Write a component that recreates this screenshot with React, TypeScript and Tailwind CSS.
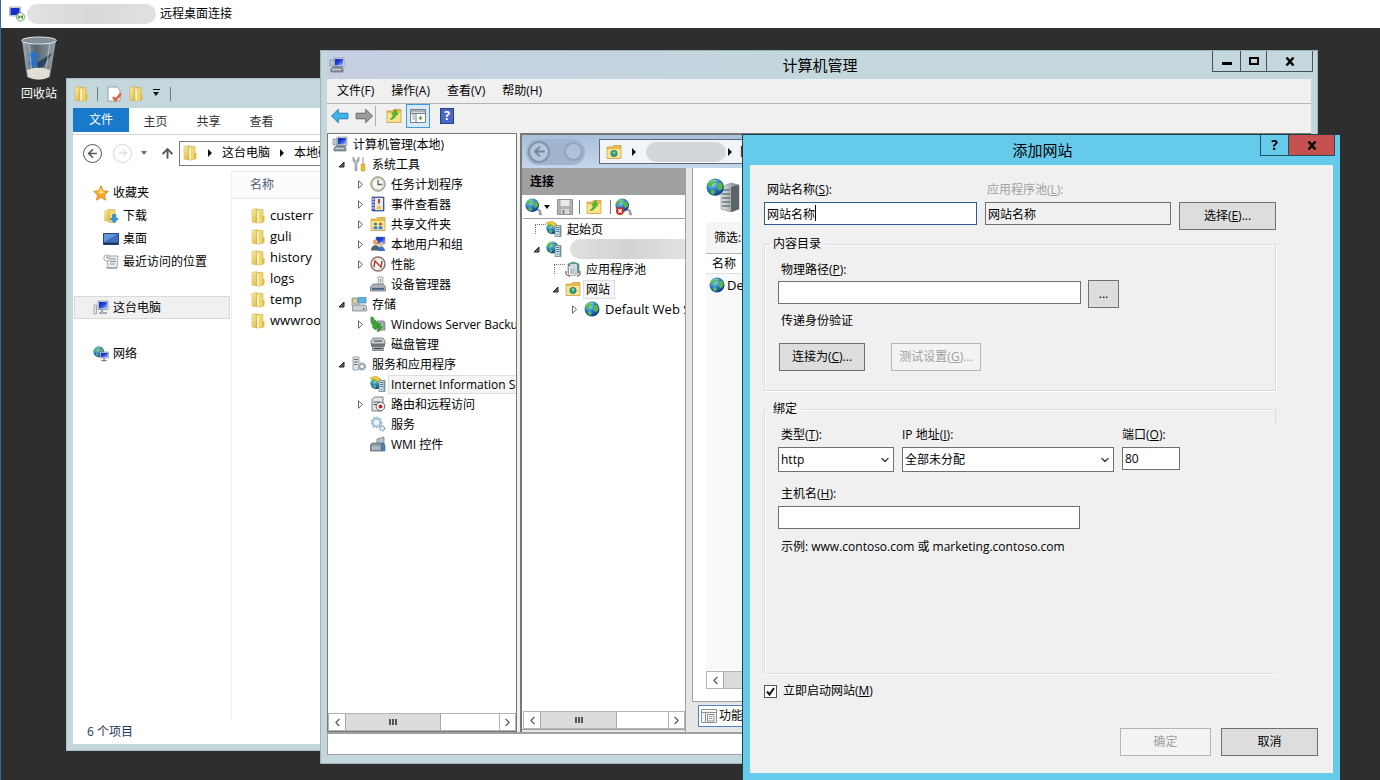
import type { ReactNode } from 'react';
import { ArrowLeft, ArrowRight, ArrowUp, ChevronDown, ChevronLeft, ChevronRight } from 'lucide-react';

type IconProps = { size?: number };

/* Dégradés partagés par toutes les icônes */
function IconDefs() {
  return (
    <svg width="0" height="0" className="absolute" aria-hidden="true">
      <defs>
        <linearGradient id="folder" x1="0" y1="0" x2="1" y2="1">
          <stop offset="0" stopColor="#fbf0a8" />
          <stop offset="1" stopColor="#d9b13c" />
        </linearGradient>
        <radialGradient id="globe" cx="0.35" cy="0.3" r="0.8">
          <stop offset="0" stopColor="#9fe0f5" />
          <stop offset="0.45" stopColor="#2b7fce" />
          <stop offset="1" stopColor="#0d2f78" />
        </radialGradient>
        <linearGradient id="metal" x1="0" y1="0" x2="1" y2="0">
          <stop offset="0" stopColor="#e6e9eb" />
          <stop offset="1" stopColor="#70787f" />
        </linearGradient>
        <linearGradient id="screen" x1="0" y1="0" x2="1" y2="1">
          <stop offset="0" stopColor="#0b1fb0" />
          <stop offset="0.5" stopColor="#2746dd" />
          <stop offset="1" stopColor="#a9c4ff" />
        </linearGradient>
        <linearGradient id="bin" x1="0" y1="0" x2="1" y2="0">
          <stop offset="0" stopColor="#b9c4cc" />
          <stop offset="0.4" stopColor="#5f6f7b" />
          <stop offset="1" stopColor="#aab6be" />
        </linearGradient>
      </defs>
    </svg>
  );
}

function Svg({ size = 16, box = 16, children }: IconProps & { box?: number; children: ReactNode }) {
  return (
    <svg width={size} height={size} viewBox={`0 0 ${box} ${box}`} className="shrink-0" aria-hidden="true">
      {children}
    </svg>
  );
}

const GlobeShape = () => (
  <>
    <circle cx="8" cy="8" r="7.5" fill="url(#globe)" />
    <path d="M3 3.2 6 1.4l3 .8-1 2-2.4 1L5 7.4 2.6 8 1.4 6zM9.6 5l3-1.6 2 3.2-.6 3-2.4 1.6-1.8-2.4zM4 10l3 .6 1 2-1.6 2L4 13z" fill="#58b94a" />
    <path d="M3 4.5A6 5 0 0 1 12 3 8 5 0 0 0 3 4.5z" fill="#fff" opacity=".45" />
  </>
);

const TowerShape = () => (
  <>
    <path d="M9 4.5h6V15.500H9z" fill="#cfe3ee" stroke="#5f7482" strokeWidth=".7" />
    <path d="M13.500 4.500H15v11h-1.500z" fill="#7f919c" />
    <path d="M10 6.500h3M10 8.500h3M10 10.500h3" stroke="#3f6f92" strokeWidth=".9" />
    <circle cx="11.5" cy="13.3" r=".9" fill="#55c13d" />
  </>
);

const MonitorShape = () => (
  <>
    <path d="M5 1h10v8.5H5z" fill="#e2e6ea" stroke="#7b8794" strokeWidth=".7" />
    <path d="M6 2h8v6.5H6z" fill="url(#screen)" />
  </>
);

const Globe = ({ size }: IconProps) => <Svg size={size}><GlobeShape /></Svg>;

const Folder = ({ size }: IconProps) => (
  <Svg size={size}>
    <path d="M2 1.5 7 .5l1 1v13.500l-6-1z" fill="url(#folder)" stroke="#cda93c" strokeWidth=".5" />
    <path d="M7 1.500h6v13H7z" fill="#f0d872" stroke="#c9a437" strokeWidth=".5" />
    <path d="M7 2 9.5 2.500v13L7 14.500z" fill="#fff6c4" stroke="#d2b04a" strokeWidth=".4" />
    <path d="M12 8h2.5v5.5L12 14.500z" fill="#e2bd4c" />
  </Svg>
);

const FlatFolder = ({ children }: { children?: ReactNode }) => (
  <Svg>
    <path d="M1 3h5l1.5-1.500H15V14.500H1z" fill="#e9bc4d" stroke="#b98d2c" strokeWidth=".6" />
    <path d="M1.5 5h13v9h-13z" fill="#fbe38e" />
    {children}
  </Svg>
);

const FolderUp = () => (
  <FlatFolder>
    <path d="M4 11.500c1-1 3-2.500 3.500-5L5.600 6l4-4.500L12 7l-1.800-.3C9.500 9.500 7 11.500 4 11.500z" fill="#4cc02c" stroke="#2d8f18" strokeWidth=".5" />
  </FlatFolder>
);

const SiteFolder = () => (
  <FlatFolder>
    <circle cx="8" cy="9.5" r="3.2" fill="#2b9e8f" stroke="#1e6f72" strokeWidth=".6" />
    <path d="M6.5 8.500 8 7.300l1.500 1.200L8 10z" fill="#a8e58a" />
  </FlatFolder>
);

const SharedFolder = () => (
  <FlatFolder>
    <circle cx="5.5" cy="8" r="1.6" fill="#2f8f86" />
    <circle cx="10.5" cy="8" r="1.6" fill="#d4483a" />
    <path d="M3 13.500c0-5 5-5 5 0zM8 13.500c0-5 5-5 5 0z" fill="#3f7fb5" stroke="#fff" strokeWidth=".4" />
  </FlatFolder>
);

const ComputerManagement = ({ size }: IconProps) => (
  <Svg size={size}>
    <MonitorShape />
    <path d="M1 3h4v6H1z" fill="#b8cdd6" stroke="#6d7c85" strokeWidth=".6" />
    <path d="M4 10h9l1 2v3H2v-3z" fill="#8d979d" stroke="#52595e" strokeWidth=".6" />
    <path d="M3.5 12.500h9" stroke="#e9edef" strokeDasharray="2 1" />
  </Svg>
);

const ThisPc = () => (
  <Svg>
    <MonitorShape />
    <path d="M1 5h2.5v9H1z" fill="#dfe4e8" stroke="#7b8794" strokeWidth=".6" />
    <path d="M9 9.500v2.500M6 13h8" stroke="#8c98a3" strokeWidth="1.6" />
  </Svg>
);

const Network = () => (
  <Svg>
    <g transform="scale(.72)"><GlobeShape /></g>
    <path d="M7 6h8.5v6H7z" fill="#e2e6ea" stroke="#7b8794" strokeWidth=".6" />
    <path d="M7.8 6.800h7v4.500h-7z" fill="url(#screen)" />
    <path d="M11 12v2M8.5 14.700h5" stroke="#6c7b8a" strokeWidth="1.2" />
  </Svg>
);

const RemoteDesktop = () => (
  <Svg>
    <path d="M.5 1h11v9H.5z" fill="#d8dce4" stroke="#8a93a5" strokeWidth=".6" />
    <path d="M1.5 2h9v7h-9z" fill="#1230c8" />
    <circle cx="11.5" cy="11" r="4.2" fill="#eef3ea" stroke="#6b7f6b" strokeWidth=".7" />
    <path d="m9 9.500 1.700 1.500L9 12.500M14 9.500 12.300 11l1.700 1.500" fill="none" stroke="#3a8b2b" strokeWidth="1.2" />
  </Svg>
);

const Star = () => (
  <Svg>
    <path d="m8 .8 2.200 4.900 5.200.6-3.900 3.600 1.100 5.300L8 12.500l-4.600 2.700 1.100-5.300L.6 6.300l5.200-.6z" fill="#f6a52c" stroke="#d97f14" strokeWidth=".7" />
    <path d="m8 3 1.500 3.500 3 .5L8 9 3.500 7l3-.5z" fill="#ffe07e" />
  </Svg>
);

const Downloads = () => (
  <Svg>
    <path d="M1 2 6 1l1 1v12l-6-1z" fill="url(#folder)" />
    <path d="M6 1.500h6v13H6z" fill="#f0d872" stroke="#c9a437" strokeWidth=".5" />
    <path d="M9.5 6.500H13v4h2.500L11.300 15 7 10.500h2.500z" fill="#2f9be6" stroke="#1a69b1" strokeWidth=".5" />
  </Svg>
);

const DesktopIcon = () => (
  <Svg>
    <path d="M.5 2.500h15v11H.5z" fill="#3d6fc0" stroke="#27457e" />
    <path d="M1 3h14L1 11z" fill="#6096dc" />
    <path d="M1 12.500h14" stroke="#1c2f55" strokeWidth="1.5" />
  </Svg>
);

const Recent = () => (
  <Svg>
    <path d="M4 2h11l-1 12H5z" fill="#eef0f1" stroke="#8e969b" strokeWidth=".8" />
    <path d="M7 5h6M7 7.500h6M7 10h5M3 14h11" stroke="#82909a" />
    <circle cx="4" cy="4" r="3.2" fill="#f6f8f9" stroke="#8e969b" strokeWidth=".8" />
    <path d="M4 2v2h2" fill="none" stroke="#5d6b75" strokeWidth=".8" />
  </Svg>
);

const Tools = () => (
  <Svg>
    <path d="M2 1v4l2 2v7.500h2V7l2-2V1L6.500 3v2h-3V3z" fill="#c3c9cd" stroke="#6e777d" strokeWidth=".6" />
    <path d="M11.5 1h1v7h-1z" fill="#8b9499" />
    <path d="M10.200 8h3.600v6.500q-1.800 1.500-3.600 0z" fill="#f4bf2c" stroke="#b5820f" strokeWidth=".6" />
  </Svg>
);

const ClockIcon = () => (
  <Svg>
    <circle cx="8" cy="8" r="7.2" fill="#d9d8d0" stroke="#8b8a7d" />
    <circle cx="8" cy="8" r="5.4" fill="#fffdf1" stroke="#b6ad8d" strokeWidth=".5" />
    <path d="M8 4v4.500h4" fill="none" stroke="#48627e" strokeWidth="1.3" />
  </Svg>
);

const EventViewer = () => (
  <Svg>
    <path d="M2 1h12v14H2z" fill="#4766ae" stroke="#293e77" strokeWidth=".6" />
    <path d="M5 2h8v12H5z" fill="#e8ecf5" />
    <path d="M2 3h2.500M2 6h2.500M2 9h2.500M2 12h2.500" stroke="#fff" />
    <path d="M8 3h2v4.500H8z" fill="#d23c32" />
    <path d="M9 8.500 12 13H6z" fill="#efc22b" />
  </Svg>
);

const Users = () => (
  <Svg>
    <path d="M6 1h9v7H6z" fill="url(#screen)" stroke="#8490a6" strokeWidth=".6" />
    <circle cx="5.5" cy="6" r="2.6" fill="#e3a16a" />
    <path d="M1 14.500c0-7 9-7 9 0z" fill="#4f6570" />
    <circle cx="11" cy="8.5" r="2.2" fill="#e9bf92" />
    <path d="M7.5 15c0-6 7.500-6 7.500 0z" fill="#3f6dc6" />
  </Svg>
);

const Performance = () => (
  <Svg>
    <circle cx="8" cy="8" r="7" fill="#fff" stroke="#8c6a66" strokeWidth="1.4" />
    <circle cx="8" cy="8" r="5" fill="none" stroke="#c9c9c9" strokeWidth=".8" />
    <path d="m4 11 1-6 6 6 1-6" fill="none" stroke="#c03329" strokeWidth="1.4" />
  </Svg>
);

const Devices = () => (
  <Svg>
    <path d="M8 1h5v7H8z" fill="#e9ece9" stroke="#87908b" strokeWidth=".7" />
    <path d="M10.500 3v3" stroke="#5f9d59" />
    <path d="M3 8h10l2.500 3v4H.5v-4z" fill="#aab3ba" stroke="#626c75" strokeWidth=".7" />
    <path d="M2 12.800h12" stroke="#47618a" strokeWidth="1.8" />
  </Svg>
);

const Storage = () => (
  <Svg>
    <path d="M1 2h7v8H1z" fill="#d5d9d8" stroke="#7c8584" strokeWidth=".7" />
    <circle cx="4" cy="5" r="2.5" fill="#e5d98f" stroke="#7c8584" strokeWidth=".6" />
    <path d="M7 1.500h8v5.500H7z" fill="#5bb4e6" stroke="#4e7d97" strokeWidth=".7" />
    <path d="M3 9h11l1.500 2v4H1.500v-4z" fill="#c9cfd2" stroke="#6d767b" strokeWidth=".7" />
    <circle cx="12.8" cy="13" r=".9" fill="#3fae31" />
  </Svg>
);

const Backup = () => (
  <Svg>
    <path d="M7 5h7l1 2v7H7z" fill="#a6afb6" stroke="#666f77" strokeWidth=".7" />
    <circle cx="11.5" cy="9.5" r="2" fill="#dfe4e7" stroke="#666f77" strokeWidth=".6" />
    <path d="M1 1c4.500 0 2.500 3 3.500 6l.5-3 3.500 4.500L5.500 14 2 10.500l1.700-.5C1.500 8.500.5 6 1 1z" fill="#3aa834" stroke="#237520" strokeWidth=".6" />
    <path d="M7 15.500c3.500 0 4.500-2 3.500-5l2 .5L9.500 7 7 11l1.500.3c0 1.700-.5 3-1.500 4.200z" fill="#3aa834" stroke="#237520" strokeWidth=".5" />
  </Svg>
);

const Disk = () => (
  <Svg>
    <path d="M3 2h10l2 3v3H1V5z" fill="#c5cacc" stroke="#5f6668" strokeWidth=".7" />
    <path d="M1 8h14v2.500H1z" fill="#6d7578" />
    <path d="M2.5 10.500h11v4h-11z" fill="#aab0b2" stroke="#5f6668" strokeWidth=".7" />
    <path d="M4 5h8M4 12.500h8" stroke="#3f4649" strokeWidth="1.2" />
  </Svg>
);

const ServicesApps = () => (
  <Svg>
    <path d="M2 1h6v13H2z" fill="#dfe3e5" stroke="#7d878d" strokeWidth=".7" />
    <path d="M3 3.500h4M3 6h4M3 8.500h3" stroke="#5e6b73" />
    <circle cx="11" cy="10.5" r="3.2" fill="none" stroke="#8fa6b7" strokeWidth="2" strokeDasharray="1.7 .8" />
    <circle cx="11" cy="10.5" r="2.3" fill="none" stroke="#8fa6b7" strokeWidth="1.2" />
  </Svg>
);

const Iis = () => (
  <Svg>
    <g transform="translate(0 1) scale(.78)"><GlobeShape /></g>
    <path d="M0 2 6 0l5 3.500-2.500 3L6 4z" fill="#f2c93a" stroke="#b98f16" strokeWidth=".5" />
    <TowerShape />
  </Svg>
);

const GlobeServer = () => (
  <Svg>
    <g transform="scale(.8)"><GlobeShape /></g>
    <TowerShape />
  </Svg>
);

const BigGlobeServer = () => (
  <Svg size={34} box={34}>
    <path d="m15 9 10-4 8 2v24l-8 3-10-3z" fill="url(#metal)" stroke="#798187" strokeWidth=".6" />
    <path d="m25 9 8-2v24l-8 3z" fill="#5d6468" />
    <path d="M16 12h8M16 16h8M16 20h8M16 24h8M16 28h8" stroke="#6d7579" strokeWidth="1.4" />
    <g transform="scale(1.15)"><GlobeShape /></g>
  </Svg>
);

const Routing = () => (
  <Svg>
    <path d="M2 3.500 5 1h8v12l-3 2H2z" fill="#e3e6e7" stroke="#596165" strokeWidth=".8" />
    <path d="M3.5 6h6M3.500 8.500h3" stroke="#48545b" />
    <circle cx="10.5" cy="10.5" r="4.3" fill="#fff" stroke="#333" strokeWidth=".8" />
    <circle cx="10.5" cy="10.5" r="2" fill="#d8202a" />
  </Svg>
);

const Gears = () => (
  <Svg>
    <circle cx="6.5" cy="6.5" r="4.6" fill="none" stroke="#9dbbd2" strokeWidth="2.6" strokeDasharray="2 1" />
    <circle cx="6.5" cy="6.5" r="3.6" fill="#edf4f9" stroke="#9dbbd2" strokeWidth="1.4" />
    <circle cx="12.3" cy="12.3" r="2.3" fill="#edf4f9" stroke="#86a9c3" strokeWidth="1.7" strokeDasharray="1.4 .6" />
  </Svg>
);

const Wmi = () => (
  <Svg>
    <path d="M7 3 14 1v8H7z" fill="#b6c0c6" stroke="#68747b" strokeWidth=".7" />
    <path d="M2 7h9l1 2v6H.5V9z" fill="#8d9aa3" stroke="#4e5b64" strokeWidth=".7" />
    <path d="M2 11h8M2 13h8" stroke="#dfe6ea" strokeWidth=".8" />
    <path d="M12 7h2v2h1v6h-3z" fill="#4487c4" stroke="#275b8d" strokeWidth=".5" />
  </Svg>
);

const AppPool = () => (
  <Svg>
    <path d="M3 3 8 1l6 2v9H3z" fill="#45a59d" stroke="#387b7b" strokeWidth=".6" />
    <path d="M5 3h7v10H5z" fill="#fff" stroke="#7f8b92" strokeWidth=".7" />
    <path d="M3.5 5H10v9.500H3.500z" fill="#f2f5f7" stroke="#7f8b92" strokeWidth=".7" />
    <path d="M5 8h4M5 10h4M5 12h4" stroke="#5b7f9d" strokeWidth=".8" />
    <path d="M1 10v3q2 2.500 4 2.200M15 10v3q-1 2-3 2.200" fill="none" stroke="#a04f3e" strokeWidth="1.2" />
  </Svg>
);

const GlobePlug = ({ error = false }: { error?: boolean }) => (
  <Svg size={18} box={18}>
    <path d="m11 11 4 2v3h2" stroke="#9aa5ab" strokeWidth="2.4" fill="none" />
    <g transform="scale(.9)"><GlobeShape /></g>
    {error && <circle cx="5" cy="13" r="4" fill="#c92a22" />}
    {error && <path d="m3.300 11.300 3.400 3.400m0-3.400-3.400 3.400" stroke="#fff" strokeWidth="1.3" />}
  </Svg>
);

const Floppy = () => (
  <Svg>
    <path d="M.5.5h15v15H.5z" fill="#b0b0b0" stroke="#929292" />
    <path d="M3.500 1h9v6h-9z" fill="#e9e9e9" />
    <path d="M4 10h8v5H4z" fill="#d8d8d8" />
    <path d="M5.500 11h2v4h-2z" fill="#858585" />
  </Svg>
);

const Properties = () => (
  <Svg>
    <path d="M2 1h9l3 3v11H2z" fill="#fff" stroke="#838b92" strokeWidth=".8" />
    <path d="m7 11 2.500 3L15 7.500" fill="none" stroke="#dd6442" strokeWidth="2.6" />
  </Svg>
);

const PanelIcon = () => (
  <Svg>
    <path d="M.5 1.500h15v13H.5z" fill="#fff" stroke="#7a7f85" />
    <path d="M1 2h14v2.500H1z" fill="#a9b4c0" />
    <path d="M6 5v9M2.500 7h2M2.500 9h2M2.500 11h2M1 5.500h14" stroke="#69727b" strokeWidth=".9" />
    <path d="m11.500 7.500-3 2.500 3 2.500z" fill="#3ea032" />
  </Svg>
);

const ViewIcon = () => (
  <Svg>
    <path d="M.5 1.500h15v13H.5z" fill="#f6f6f6" stroke="#8b9095" />
    <path d="M1 4.500h14M4.500 4.500v10" stroke="#8b9095" />
    <path d="M6.500 6.500H13v6.500H6.500z" fill="#fff" stroke="#6b7278" strokeWidth=".8" />
    <path d="M8 8.500h3.500M8 10.500h3.500" stroke="#6b7278" strokeWidth=".8" />
  </Svg>
);

const HelpIcon = () => (
  <span className="flex h-4 w-3.5 items-center justify-center border border-[#2a3f8f] bg-[#4a66c4] text-xs font-bold text-white">?</span>
);

const BlockArrow = ({ right = false }: { right?: boolean }) => (
  <Svg size={18}>
    <path
      d={right ? 'M15.500 8 9.500 2v3.500H1v5h8.500V14z' : 'M.5 8l6-6v3.500H15v5H6.500V14z'}
      fill={right ? '#9c9c9c' : '#3fb2ea'}
      stroke={right ? '#5f5f5f' : '#1d77ab'}
      strokeWidth=".8"
    />
  </Svg>
);

const RecycleBin = () => (
  <svg width="38" height="46" viewBox="0 0 38 46" aria-hidden="true">
    <path d="M2 4 7 41q12 6 23 0l6-37z" fill="url(#bin)" opacity=".85" />
    <path d="M7 34q12-5 23 0l-1 7q-11 5-21 0z" fill="#e2ded2" />
    <path d="m8 18 6-3 5 4-3 5 5 4-7 4-6-4 3-4z" fill="#2d6fc2" />
    <path d="m17 27 15-10-9 14-5 1z" fill="#2c4460" />
    <path d="M9 7 12 40M30 6l-5 34" stroke="#dfe6ea" strokeWidth="1.2" opacity=".5" />
    <ellipse cx="19" cy="4.5" rx="17.5" ry="3.5" fill="#7f909c" stroke="#dfe5e9" />
  </svg>
);

/* Petit triangle plein des barres d'adresse */
const Caret = ({ down = false }: { down?: boolean }) => (
  <svg width="8" height="8" viewBox="0 0 8 8" className="shrink-0" aria-hidden="true">
    <path d={down ? 'M1 2h6L4 6z' : 'M2 0v8l4-4z'} fill="#111" />
  </svg>
);

const Twisty = ({ open }: { open: boolean }) => (
  <svg width="9" height="9" viewBox="0 0 9 9" aria-hidden="true">
    {open ? <path d="M7 2v5H2z" fill="#666" stroke="#222" /> : <path d="M2.500.8v7.400l4-3.700z" fill="#fff" stroke="#666" />}
  </svg>
);

type Node = {
  label: string;
  icon: ReactNode;
  level: number;
  open?: boolean;
  selected?: boolean;
  masked?: boolean;
  dotted?: boolean;
};

const indents = ['pl-1', 'pl-1', 'pl-[23px]', 'pl-[42px]'];

function Tree({ nodes }: { nodes: Node[] }) {
  return (
    <ul className="flex-1 overflow-hidden">
      {nodes.map((n) => (
        <li key={n.label} className={`flex h-5 items-center whitespace-nowrap ${indents[n.level]}`}>
          {n.level > 0 && (
            <span className="flex w-[19px] shrink-0 items-center justify-center">
              {n.open !== undefined && <Twisty open={n.open} />}
              {n.dotted && <span className="ml-2 h-2.5 flex-1 border-t border-l border-dotted border-gray-500" />}
            </span>
          )}
          {n.icon}
          {n.masked ? (
            <span className="ml-2 h-5 flex-1 rounded-l-full bg-linear-to-r from-[#e0e0e0] via-[#d3d3d3] to-[#e2e2e2]" />
          ) : (
            <span className={`ml-0.5 border pr-1 pl-0.5 leading-[17px] ${n.selected ? 'border-[#dedede] bg-[#f5f5f5]' : 'border-transparent'} ${n.level === 3 ? 'text-[13px]' : ''}`}>
              {n.label}
            </span>
          )}
        </li>
      ))}
    </ul>
  );
}

const managementNodes: Node[] = [
  { label: '计算机管理(本地)', icon: <ComputerManagement />, level: 0 },
  { label: '系统工具', icon: <Tools />, level: 1, open: true },
  { label: '任务计划程序', icon: <ClockIcon />, level: 2, open: false },
  { label: '事件查看器', icon: <EventViewer />, level: 2, open: false },
  { label: '共享文件夹', icon: <SharedFolder />, level: 2, open: false },
  { label: '本地用户和组', icon: <Users />, level: 2, open: false },
  { label: '性能', icon: <Performance />, level: 2, open: false },
  { label: '设备管理器', icon: <Devices />, level: 2 },
  { label: '存储', icon: <Storage />, level: 1, open: true },
  { label: 'Windows Server Backup', icon: <Backup />, level: 2, open: false },
  { label: '磁盘管理', icon: <Disk />, level: 2 },
  { label: '服务和应用程序', icon: <ServicesApps />, level: 1, open: true },
  { label: 'Internet Information Services', icon: <Iis />, level: 2, selected: true },
  { label: '路由和远程访问', icon: <Routing />, level: 2, open: false },
  { label: '服务', icon: <Gears />, level: 2 },
  { label: 'WMI 控件', icon: <Wmi />, level: 2 },
];

const siteNodes: Node[] = [
  { label: '起始页', icon: <Iis />, level: 1, dotted: true },
  { label: 'server', icon: <GlobeServer />, level: 1, open: true, masked: true },
  { label: '应用程序池', icon: <AppPool />, level: 2, dotted: true },
  { label: '网站', icon: <SiteFolder />, level: 2, open: true, selected: true },
  { label: 'Default Web Site', icon: <Globe />, level: 3, open: false },
];

function ScrollBar({ thumb }: { thumb: string }) {
  return (
    <div className="flex h-[18px] border border-[#b4b4b4] bg-white">
      <button aria-label="向左滚动" className="flex w-4 items-center justify-center text-[#555]"><ChevronLeft size={13} /></button>
      <div className={`flex items-center justify-center gap-px border-x border-[#a8a8a8] bg-[#dcdcdc] ${thumb}`}>
        <span className="h-1.5 w-0.5 bg-[#555]" />
        <span className="h-1.5 w-0.5 bg-[#555]" />
        <span className="h-1.5 w-0.5 bg-[#555]" />
      </div>
      <div className="flex-1" />
      <button aria-label="向右滚动" className="flex w-4 items-center justify-center border-l border-[#b4b4b4] text-[#555]"><ChevronRight size={13} /></button>
    </div>
  );
}

/* Explorateur de fichiers */
const folders = ['custerr', 'guli', 'history', 'logs', 'temp', 'wwwroot'];

function Explorer() {
  return (
    <section className="absolute top-[50px] bottom-[29px] left-[65px] flex w-[600px] flex-col border border-[#a9bcc3] bg-[#c3d7dd] px-1.5 pb-1.5">
      <header className="flex h-[29px] items-center">
        <Folder />
        <span className="ml-2 h-3.5 border-l border-[#6d7b81]" />
        <span className="ml-2 flex items-center gap-1.5"><Properties /><Folder /></span>
        <span className="ml-1.5 flex w-3 flex-col items-center"><span className="w-[7px] border-t border-black" /><Caret down /></span>
        <span className="ml-2 h-3.5 border-l border-[#6d7b81]" />
      </header>
      <div className="flex flex-1 flex-col bg-white">
        <nav className="flex h-[27px] border-b border-[#d5d6d8] text-[#333]">
          <button className="h-6 w-14 bg-[#1979ca] text-white">文件</button>
          <button className="w-[53px] pt-0.5">主页</button>
          <button className="w-[53px] pt-0.5">共享</button>
          <button className="w-[53px] pt-0.5">查看</button>
        </nav>
        <div className="flex h-9 items-center pl-2.5">
          <button aria-label="后退" className="flex size-[19px] items-center justify-center rounded-full border border-[#555] text-[#555]"><ArrowLeft size={13} strokeWidth={3} /></button>
          <button aria-label="前进" className="ml-[11px] flex size-[19px] items-center justify-center rounded-full border border-[#d5d5d5] text-[#d0d0d0]"><ArrowRight size={12} /></button>
          <span className="ml-2 opacity-60"><Caret down /></span>
          <button aria-label="上移" className="ml-3 text-[#555]"><ArrowUp size={15} strokeWidth={3} /></button>
          <div className="ml-1 flex h-[25px] flex-1 items-center border border-[#777] pl-0.5 text-black">
            <Folder />
            <span className="mx-2"><Caret /></span>这台电脑
            <span className="mx-2"><Caret /></span>本地磁盘
          </div>
        </div>
        <div className="flex flex-1">
          <ul className="w-[159px] border-r border-[#efefef] pt-2.5">
            <li className="flex h-[23px] items-center gap-1 pl-5"><Star />收藏夹</li>
            <li className="flex h-[23px] items-center gap-1 pl-[30px]"><Downloads />下载</li>
            <li className="flex h-[23px] items-center gap-1 pl-[30px]"><DesktopIcon />桌面</li>
            <li className="flex h-[23px] items-center gap-1 pl-[30px]"><Recent />最近访问的位置</li>
            <li className="mt-[23px] mr-px ml-px flex h-[23px] items-center gap-1 border border-[#d9d9d9] bg-[#f0f0f0] pl-[18px]"><ThisPc />这台电脑</li>
            <li className="mt-[23px] flex h-[23px] items-center gap-1 pl-5"><Network />网络</li>
          </ul>
          <div className="flex-1">
            <div className="flex h-7 items-center border-y border-[#e5e5e5] bg-[#fcfcfc] pl-[18px] text-[#4c607a]">名称</div>
            <ul className="pt-1.5 text-[13px]">
              {folders.map((f) => (
                <li key={f} className="flex h-[21px] items-center gap-1 pl-[18px]"><Folder />{f}</li>
              ))}
            </ul>
          </div>
        </div>
        <footer className="flex h-6 items-center pl-3.5 text-[#1e395b]">6 个项目</footer>
      </div>
    </section>
  );
}

/* Gestion de l'ordinateur */
function IisPane() {
  return (
    <div className="flex min-w-0 flex-1 flex-col border-t-2 border-l-2 border-[#777] bg-[#e6e6e6]">
      <div className="flex h-[33px] items-center bg-linear-to-b from-[#a9c0dc] to-[#c4d6ea] pl-1">
        <div className="flex h-[26px] w-[59px] items-center justify-between rounded-full bg-[#9fb5cf] px-0.5">
          <span className="flex size-[22px] items-center justify-center rounded-full border-2 border-[#8294a9] bg-[#b4c6db] text-[#76869a]"><ArrowLeft size={15} strokeWidth={3} /></span>
          <span className="size-[19px] rounded-full border-2 border-[#8fa5c0] bg-[#aec3da]" />
        </div>
        <div className="ml-3.5 flex h-[25px] flex-1 items-center border border-[#5b6b7c] bg-[#f1f5fa] pl-1.5">
          <SiteFolder />
          <span className="ml-2"><Caret /></span>
          <span className="ml-2 h-5 w-20 rounded-full bg-[#d3d7dc]" />
          <span className="mr-1.5"><Caret /></span>网站
        </div>
      </div>
      <div className="flex flex-1 gap-1.5">
        <div className="flex w-[164px] flex-col border-r border-[#a0a0a0] bg-white pl-px">
          <h2 className="-ml-px flex h-[27px] items-center bg-[#a0a0a0] pl-2 font-bold">连接</h2>
          <div className="flex h-6 items-center border-b border-[#a0a0a0] pl-0.5">
            <GlobePlug />
            <Caret down />
            <span className="ml-1.5"><Floppy /></span>
            <span className="mx-1.5 h-3.5 border-l border-[#777]" />
            <FolderUp />
            <span className="mr-1 ml-2 h-3.5 border-l border-[#777]" />
            <GlobePlug error />
          </div>
          <Tree nodes={siteNodes} />
          <ScrollBar thumb="w-[77px]" />
          <div className="-ml-px h-[3px] border-t border-[#a0a0a0] bg-[#e6e6e6]" />
        </div>
        <div className="flex min-w-0 flex-1 flex-col">
          <div className="flex flex-1 flex-col border-b border-l border-[#a0a0a0] bg-white pb-3 pl-[13px]">
            <div className="py-2.5"><BigGlobeServer /></div>
            <div className="flex h-8 items-center border-b border-[#b8b8b8] bg-[#f5f5f5] pl-2">筛选:</div>
            <div className="flex h-5 items-center border-b border-[#e0e0e0] pl-1.5">名称</div>
            <div className="flex flex-1 items-start gap-0.5 bg-[#f9f9f9] pt-[3px] pl-[3px] text-[13px] leading-4"><Globe />Default Web Site</div>
            <ScrollBar thumb="w-[300px]" />
          </div>
          <div className="flex h-[30px] items-start pt-[3px] pl-1.5">
            <button className="flex h-[22px] items-center gap-0.5 border border-[#4d86c6] bg-white px-0.5"><ViewIcon />功能视图</button>
          </div>
        </div>
      </div>
    </div>
  );
}

function ComputerManagementWindow() {
  return (
    <section className="absolute top-[22px] right-[62px] bottom-4 left-[319px] flex flex-col border border-[#9fb2ba] bg-[#c3d7dd] px-1.5 pb-2">
      <header className="-mr-0.5 grid h-7 shrink-0 grid-cols-[1fr_auto_1fr] items-center bg-linear-to-r from-[#c6cfe2] via-[#c3d7dd] to-[#c3d7dd]">
        <span className="pl-0.5"><ComputerManagement /></span>
        <h1 className="text-[15px] leading-6">计算机管理</h1>
        <div className="flex h-[21px] self-start justify-self-end border border-t-0 border-[#44525c]">
          <button aria-label="最小化" className="flex w-7 items-center justify-center border-r border-[#44525c]"><span className="mt-1 h-[3px] w-2.5 bg-black" /></button>
          <button aria-label="最大化" className="flex w-[26px] items-center justify-center border-r border-[#44525c]"><span className="h-2 w-2.5 border-2 border-black" /></button>
          <CloseButton />
        </div>
      </header>
      <nav className="flex h-[25px] shrink-0 items-center gap-[17px] border-b border-[#b5b5b5] bg-[#f0f0f0] pl-2.5">
        <button>文件(F)</button>
        <button>操作(A)</button>
        <button>查看(V)</button>
        <button>帮助(H)</button>
      </nav>
      <div className="flex h-[29px] shrink-0 items-start bg-[#f0f0f0] pl-1">
        <div className="flex h-6 items-center">
          <BlockArrow />
          <span className="ml-1.5"><BlockArrow right /></span>
          <span className="mr-2.5 ml-0.5 h-5 border-l border-[#b0b0b0]" />
          <FolderUp />
          <span className="ml-1 flex size-6 items-center justify-center border border-[#4496dc] bg-[#d8eafa]"><PanelIcon /></span>
          <span className="ml-2.5"><HelpIcon /></span>
        </div>
      </div>
      <div className="flex min-h-0 flex-1 gap-[3px] border-b border-[#a0a0a0] bg-[#f0f0f0]">
        <div className="flex w-[190px] flex-col border border-[#777] bg-white">
          <Tree nodes={managementNodes} />
          <ScrollBar thumb="w-24" />
        </div>
        <IisPane />
      </div>
      <footer className="h-[22px] shrink-0 border border-[#a0a0a0] bg-white" />
    </section>
  );
}

function CloseButton() {
  return (
    <button aria-label="关闭" className="flex w-[45px] items-center justify-center">
      <svg width="10" height="9" viewBox="0 0 10 9" aria-hidden="true"><path d="m1.500.5 7 8m0-8-7 8" stroke="#000" strokeWidth="2.4" /></svg>
    </button>
  );
}

/* Boîte de dialogue « ajouter un site » */
const field = 'h-[23px] min-w-0 border border-[#707070] bg-white px-0.5 outline-none';
const button = 'h-7 border border-[#707070] bg-[#dddddd]';
const buttonOff = 'h-7 border border-[#b5b5b5] bg-[#f3f3f3] text-[#a0a0a0]';
const group = 'relative border border-[#dcdcdc] pr-3 pl-[13px] shadow-[inset_1px_1px_0_#fff,1px_1px_0_#fff]';

function Select({ id, value }: { id: string; value: string }) {
  return (
    <span className="relative flex">
      <select id={id} defaultValue={value} className="h-[25px] w-full appearance-none border border-[#707070] bg-white px-0.5 outline-none">
        <option>{value}</option>
      </select>
      <ChevronDown size={12} strokeWidth={3} className="pointer-events-none absolute top-[7px] right-[3px] text-[#444]" />
    </span>
  );
}

function AddSiteDialog() {
  return (
    <section role="dialog" aria-label="添加网站" className="absolute top-[106px] right-10 bottom-0 left-[741px] flex flex-col border-t border-l border-[#1f3e4c] bg-[#66cbea] pr-[7px] pb-[7px] pl-[7px]">
      <header className="-mr-0.5 grid h-[30px] shrink-0 grid-cols-[1fr_auto_1fr] items-center">
        <span />
        <h1 className="text-[15px] leading-7">添加网站</h1>
        <div className="flex h-[21px] self-start justify-self-end border border-t-0 border-[#1f4e5e]">
          <button aria-label="帮助" className="w-7 border-r border-[#1f4e5e] text-sm leading-5 font-bold">?</button>
          <span className="flex bg-[#c75050]"><CloseButton /></span>
        </div>
      </header>
      <form className="flex flex-1 flex-col bg-[#f0f0f0] pt-[15px] pr-[15px] pb-[17px] pl-3.5">
        <div className="mr-[42px] grid grid-cols-[213fr_186fr_97px] gap-2">
          <div className="flex flex-col gap-0.5">
            <label htmlFor="site" className="h-5 pl-[3px] leading-5">网站名称(<u>S</u>):</label>
            <span className="relative flex">
              <input id="site" defaultValue="网站名称" className="h-[23px] w-full border border-[#2f5b8c] bg-white px-0.5 outline-none" />
              <span className="absolute top-[3px] left-[51px] h-4 w-px bg-black" />
            </span>
          </div>
          <div className="flex flex-col gap-0.5">
            <label htmlFor="pool" className="h-5 pl-0.5 leading-5 text-[#a0a0a0]">应用程序池(<u>L</u>):</label>
            <input id="pool" readOnly defaultValue="网站名称" className="h-[23px] min-w-0 border border-[#707070] px-0.5 outline-none" />
          </div>
          <button type="button" className={`${button} mt-[22px]`}>选择(<u>E</u>)...</button>
        </div>

        <fieldset className={`${group} mt-1.5 mr-[42px] pb-[19px]`}>
          <legend className="-ml-[9px] px-1 leading-4">内容目录</legend>
          <div className="flex flex-col pt-2">
            <label htmlFor="path" className="pl-[3px] leading-5">物理路径(<u>P</u>):</label>
            <div className="flex gap-[7px]">
              <input id="path" className={`${field} mt-px w-[303px]`} />
              <button type="button" aria-label="浏览" className={`${button} w-[31px]`}>...</button>
            </div>
            <p className="mt-[3px] pl-[3px] leading-5">传递身份验证</p>
            <div className="mt-3 ml-px flex gap-[26px]">
              <button type="button" className={`${button} w-[86px]`}>连接为(<u>C</u>)...</button>
              <button type="button" disabled className={`${buttonOff} w-[90px]`}>测试设置(<u>G</u>)...</button>
            </div>
          </div>
        </fieldset>

        <fieldset className="relative mt-2.5 mr-[42px] flex-1 border border-r-0 border-[#dcdcdc] pl-[13px] shadow-[inset_1px_1px_0_#fff,0_1px_0_#fff]">
          <legend className="-ml-[9px] px-1 leading-4">绑定</legend>
          <span className="absolute -top-2 right-0 h-4 border-r border-[#dcdcdc]" />
          <div className="flex gap-2 pt-2">
            <div className="flex w-[116px] flex-col gap-0.5">
              <label htmlFor="type" className="pl-[3px] leading-5">类型(<u>T</u>):</label>
              <Select id="type" value="http" />
            </div>
            <div className="flex w-[212px] flex-col gap-0.5">
              <label htmlFor="ip" className="leading-5">IP 地址(<u>I</u>):</label>
              <Select id="ip" value="全部未分配" />
            </div>
            <div className="flex w-[58px] flex-col gap-0.5">
              <label htmlFor="port" className="leading-5">端口(<u>O</u>):</label>
              <input id="port" defaultValue="80" className={field} />
            </div>
          </div>
          <div className="mt-3 flex flex-col gap-0.5">
            <label htmlFor="host" className="pl-[3px] leading-5">主机名(<u>H</u>):</label>
            <input id="host" className={`${field} w-[302px]`} />
          </div>
          <p className="mt-2 pl-[3px] leading-5">示例: www.contoso.com 或 marketing.contoso.com</p>
        </fieldset>

        <label className="mt-[7px] flex h-5 items-center gap-1.5">
          <span className="relative flex">
            <input type="checkbox" defaultChecked className="size-[13px] appearance-none border border-[#555] bg-white" />
            <svg width="13" height="13" viewBox="0 0 13 13" className="pointer-events-none absolute" aria-hidden="true">
              <path d="m3 6.500 2.500 3L10 3" fill="none" stroke="#111" strokeWidth="2" />
            </svg>
          </span>
          <span>立即启动网站(<u>M</u>)</span>
        </label>
        <div className="mt-[27px] flex justify-end gap-2.5">
          <button type="button" disabled className={`${buttonOff} w-[91px]`}>确定</button>
          <button type="button" className={`${button} w-[97px]`}>取消</button>
        </div>
      </form>
    </section>
  );
}

export default function App() {
  return (
    <div className="flex h-screen flex-col overflow-hidden border-l border-[#2d6ca3] bg-[#2e2e2e] font-['Open_Sans','Noto_Sans_CJK_SC',sans-serif] text-xs text-black">
      <IconDefs />
      <header className="flex h-7 shrink-0 items-center bg-white pl-2">
        <RemoteDesktop />
        <span className="ml-0.5 h-5 w-[129px] rounded-full bg-linear-to-r from-[#e2e2e2] via-[#d9d9d9] to-[#e0e0e0]" />
        <span className="ml-1">远程桌面连接</span>
      </header>
      <main className="relative flex-1">
        <div className="flex w-[76px] flex-col items-center gap-1 pt-2 text-white">
          <RecycleBin />
          回收站
        </div>
        <Explorer />
        <ComputerManagementWindow />
        <AddSiteDialog />
      </main>
    </div>
  );
}
